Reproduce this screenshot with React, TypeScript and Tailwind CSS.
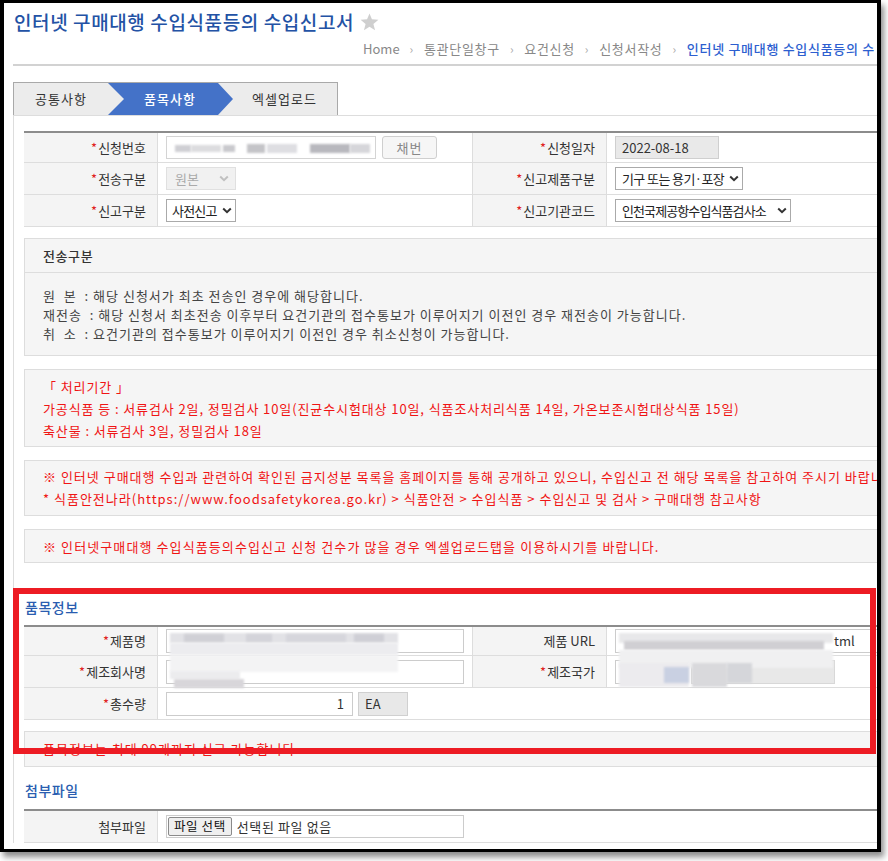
import React from "react";

const Chevron = ({ color = "#333" }: { color?: string }) => (
  <svg width="10" height="7" viewBox="0 0 10 7" className="shrink-0">
    <path d="M1.2 1.5 L5 5.2 L8.8 1.5" fill="none" stroke={color} strokeWidth="2" />
  </svg>
);

const Star = () => (
  <svg width="19" height="18" viewBox="0 0 24 23">
    <polygon
      points="12,0.5 15.1,8.1 23.4,8.6 17,13.9 19.1,22 12,17.5 4.9,22 7,13.9 0.6,8.6 8.9,8.1"
      fill="#cfcfcf"
    />
  </svg>
);

const Req = () => <span className="text-[#e02020] mr-[1px]">*</span>;

const Label = ({ children, req = true }: { children: React.ReactNode; req?: boolean }) => (
  <div className="w-[134px] shrink-0 h-full bg-[#f4f4f4] border-r border-[#dddddd] flex items-center justify-end pr-[11px] text-[13px] text-[#333]">
    {req && <Req />}
    {children}
  </div>
);

const Sep = () => <span className="text-[#aaa] text-[12px] mx-[10px]">›</span>;

const BlurBlocks = ({ blocks }: { blocks: [number, number, number, number, string][] }) => (
  <>
    {blocks.map(([l, t, w, h, c], i) => (
      <div
        key={i}
        className="absolute blur-[1px]"
        style={{ left: l, top: t, width: w, height: h, background: c }}
      />
    ))}
  </>
);

export default function App() {
  return (
    <div className="w-[888px] h-[861px] bg-white font-['Noto_Sans_CJK_KR','Noto_Sans',sans-serif]">
      <div className="w-[881px] h-[852px] border-x-4 border-t-[3px] border-b-[3px] border-black shadow-[3px_5px_6px_rgba(0,0,0,0.45)] overflow-hidden relative bg-white">
        <div className="w-[1000px]">
          {/* Title */}
          <div className="pt-[6px] pl-[10px] flex items-center gap-[6px]">
            <h1 className="text-[19px] leading-[26px] font-medium text-[#2352a5] tracking-[0.6px]">
              인터넷 구매대행 수입식품등의 수입신고서
            </h1>
            <Star />
          </div>
          {/* Breadcrumb */}
          <div className="mt-[5px] ml-[359px] flex items-center h-[18px] text-[13px] text-[#888] whitespace-nowrap tracking-[0.7px]">
            <span className="tracking-normal">Home</span>
            <Sep />
            <span>통관단일창구</span>
            <Sep />
            <span>요건신청</span>
            <Sep />
            <span>신청서작성</span>
            <Sep />
            <span className="text-[#2d5fd0] font-medium">인터넷 구매대행 수입식품등의 수</span>
          </div>
          <div className="mt-[6px] ml-[9px] h-[2px] bg-[#d2d2d2]" />

          {/* Tabs */}
          <div className="mt-[16px] ml-[9px] w-[325px] h-[34px] border border-[#a9a9a9] flex text-[13px] tracking-[1px]">
            <div className="w-[94px] bg-[#ececec] relative flex items-center justify-center text-[#333] z-20">
              공통사항
              <div className="absolute right-[-16px] top-0 w-0 h-0 border-y-[16px] border-y-transparent border-l-[16px] border-l-[#ececec]" />
            </div>
            <div className="w-[110px] bg-[#4472c8] relative flex items-center justify-center pl-[14px] text-white font-medium z-10">
              품목사항
              <div className="absolute right-[-15px] top-0 w-0 h-0 border-y-[16px] border-y-transparent border-l-[15px] border-l-[#4472c8]" />
            </div>
            <div className="flex-1 bg-[#ececec] flex items-center justify-center pl-[14px] text-[#333]">
              엑셀업로드
            </div>
          </div>

          {/* Content container */}
          <div className="ml-[9px] border-l border-t border-[#dddddd] pl-[10px] pt-[15px] -mt-[1px]">
            {/* Form table */}
            <div className="border-t-2 border-[#8c8c8c]">
              <div className="h-[30px] flex border-b border-[#dddddd]">
                <Label>신청번호</Label>
                <div className="w-[315px] shrink-0 border-r border-[#dddddd] flex items-center pl-[8px] gap-[6px]">
                  <div className="w-[210px] h-[23px] border border-[#d4d4d4] relative overflow-hidden bg-white">
                    <BlurBlocks
                      blocks={[
                        [8, 8, 16, 7, "#cfcfd4"],
                        [24, 8, 30, 7, "#dcdcdf"],
                        [56, 8, 12, 7, "#c9c9cd"],
                        [80, 7, 18, 9, "#c4c4c8"],
                        [100, 7, 30, 9, "#dedee2"],
                        [143, 7, 40, 9, "#b8b8be"],
                        [183, 7, 20, 9, "#d6d6da"],
                      ]}
                    />
                  </div>
                  <div className="w-[55px] h-[23px] border border-[#cfcfcf] rounded-[3px] bg-[#f6f6f6] flex items-center justify-center text-[13px] text-[#888] tracking-[1px]">
                    채번
                  </div>
                </div>
                <Label>신청일자</Label>
                <div className="flex-1 flex items-center pl-[8px]">
                  <div className="w-[104px] h-[23px] border border-[#cfcfcf] bg-[#e9e9e9] flex items-center pl-[6px] text-[13px] text-[#333]">
                    2022-08-18
                  </div>
                </div>
              </div>
              <div className="h-[32px] flex border-b border-[#dddddd]">
                <Label>전송구분</Label>
                <div className="w-[315px] shrink-0 border-r border-[#dddddd] flex items-center pl-[8px]">
                  <div className="w-[70px] h-[23px] border border-[#e0e0e0] bg-[#f1f1f1] flex items-center justify-between pl-[8px] pr-[6px] text-[13px] text-[#aaa]">
                    <span>원본</span>
                    <Chevron color="#c0c0c0" />
                  </div>
                </div>
                <Label>신고제품구분</Label>
                <div className="flex-1 flex items-center pl-[8px]">
                  <div className="w-[128px] h-[23px] border border-[#aaaaaa] bg-white flex items-center justify-between pl-[6px] pr-[3px] text-[13px] text-[#222] whitespace-nowrap overflow-hidden">
                    <span className="tracking-[-0.6px]">기구 또는 용기·포장</span>
                    <Chevron />
                  </div>
                </div>
              </div>
              <div className="h-[32px] flex border-b border-[#dddddd]">
                <Label>신고구분</Label>
                <div className="w-[315px] shrink-0 border-r border-[#dddddd] flex items-center pl-[8px]">
                  <div className="w-[70px] h-[23px] border border-[#aaaaaa] bg-white flex items-center justify-between pl-[5px] pr-[3px] text-[13px] text-[#222] whitespace-nowrap overflow-hidden">
                    <span className="tracking-[-0.8px]">사전신고</span>
                    <Chevron />
                  </div>
                </div>
                <Label>신고기관코드</Label>
                <div className="flex-1 flex items-center pl-[8px]">
                  <div className="w-[176px] h-[23px] border border-[#aaaaaa] bg-white flex items-center justify-between pl-[6px] pr-[3px] text-[13px] text-[#222] whitespace-nowrap overflow-hidden">
                    <span className="tracking-[-0.9px]">인천국제공항수입식품검사소</span>
                    <Chevron />
                  </div>
                </div>
              </div>
            </div>

            {/* 전송구분 box */}
            <div className="mt-[11px] border border-[#dddddd] bg-[#f5f5f5]">
              <div className="h-[34px] flex items-center pl-[18px] border-b border-[#dddddd] text-[13px] text-[#333] font-medium tracking-[0.6px]">
                전송구분
              </div>
              <div className="pt-[13px] pb-[12px] pl-[18px] text-[13px] leading-[19px] text-[#444] whitespace-pre tracking-[1px]">
                <div>원  본  : 해당 신청서가 최초 전송인 경우에 해당합니다.</div>
                <div>재전송  : 해당 신청서 최초전송 이후부터 요건기관의 접수통보가 이루어지기 이전인 경우 재전송이 가능합니다.</div>
                <div>취  소  : 요건기관의 접수통보가 이루어지기 이전인 경우 취소신청이 가능합니다.</div>
              </div>
            </div>

            {/* 처리기간 */}
            <div className="mt-[13px] border border-[#dddddd] bg-[#f5f5f5] pt-[6px] pb-[4px] pl-[18px] text-[13px] leading-[22px] text-[#f01414] whitespace-nowrap tracking-[0.9px]">
              <div>「 처리기간 」</div>
              <div>가공식품 등 : 서류검사 2일, 정밀검사 10일(진균수시험대상 10일, 식품조사처리식품 14일, 가온보존시험대상식품 15일)</div>
              <div>축산물 : 서류검사 3일, 정밀검사 18일</div>
            </div>

            <div className="mt-[13px] border border-[#dddddd] bg-[#f5f5f5] pt-[5px] pb-[5px] pl-[18px] text-[13px] leading-[22px] text-[#f01414] whitespace-nowrap tracking-[1px]">
              <div>※ 인터넷 구매대행 수입과 관련하여 확인된 금지성분 목록을 홈페이지를 통해 공개하고 있으니, 수입신고 전 해당 목록을 참고하여 주시기 바랍니다.</div>
              <div>* 식품안전나라(https://www.foodsafetykorea.go.kr) &gt; 식품안전 &gt; 수입식품 &gt; 수입신고 및 검사 &gt; 구매대행 참고사항</div>
            </div>

            <div className="mt-[13px] border border-[#dddddd] bg-[#f5f5f5] pt-[6px] pb-[4px] pl-[18px] text-[13px] leading-[22px] text-[#f01414] whitespace-nowrap tracking-[1.1px]">
              <div>※ 인터넷구매대행 수입식품등의수입신고 신청 건수가 많을 경우 엑셀업로드탭을 이용하시기를 바랍니다.</div>
            </div>

            {/* 품목정보 */}
            <h2 className="mt-[34px] pl-[1px] text-[14px] leading-[20px] text-[#2a5db0] font-medium tracking-[0.5px]">품목정보</h2>
            <div className="mt-[8px] border-t-2 border-[#8c8c8c] relative">
              <div className="h-[29px] flex border-b border-[#dddddd]">
                <Label>제품명</Label>
                <div className="w-[315px] shrink-0 border-r border-[#dddddd] flex items-center pl-[8px]">
                  <div className="w-[298px] h-[24px] border border-[#cccccc] bg-white" />
                </div>
                <Label req={false}>제품 URL</Label>
                <div className="flex-1 flex items-center pl-[8px]">
                  <div className="w-[300px] h-[24px] border border-[#cccccc] bg-white flex items-center pl-[218px] text-[13px] text-[#333]">
                    tml
                  </div>
                </div>
              </div>
              <div className="h-[32px] flex border-b border-[#dddddd]">
                <Label>제조회사명</Label>
                <div className="w-[315px] shrink-0 border-r border-[#dddddd] flex items-center pl-[8px]">
                  <div className="w-[298px] h-[24px] border border-[#cccccc] bg-white" />
                </div>
                <Label>제조국가</Label>
                <div className="flex-1 flex items-center pl-[8px] gap-[5px]">
                  <div className="w-[71px] h-[24px] border border-[#cccccc] bg-white" />
                  <div className="w-[144px] h-[24px] border border-[#d8d8d8] bg-[#e8e8e8]" />
                </div>
              </div>
              <div className="h-[32px] flex border-b border-[#dddddd]">
                <Label>총수량</Label>
                <div className="flex-1 flex items-center pl-[8px] gap-[5px]">
                  <div className="w-[187px] h-[24px] border border-[#cccccc] bg-white flex items-center justify-end pr-[8px] text-[13px] text-[#333]">
                    1
                  </div>
                  <div className="w-[50px] h-[24px] border border-[#d0d0d0] bg-[#e8e8e8] flex items-center pl-[6px] text-[13px] text-[#333]">
                    EA
                  </div>
                </div>
              </div>
              {/* blurred redactions */}
              <BlurBlocks
                blocks={[
                  [146, 6, 228, 10, "#e2e2e6"],
                  [160, 7, 40, 8, "#d0d0d6"],
                  [222, 7, 26, 8, "#d4d4da"],
                  [262, 7, 60, 8, "#d6d6dc"],
                  [330, 7, 30, 8, "#cfcfd6"],
                  [146, 16, 228, 12, "#ececef"],
                  [146, 28, 228, 17, "#f3f3f4"],
                  [146, 44, 70, 8, "#ececee"],
                  [150, 52, 70, 9, "#d8d6da"],
                  [595, 6, 214, 10, "#e8e8ea"],
                  [600, 14, 200, 9, "#d0cfd3"],
                  [595, 23, 214, 18, "#f0f0f1"],
                  [595, 36, 70, 24, "#ecebee"],
                  [640, 40, 25, 16, "#c9d0e2"],
                  [668, 36, 35, 24, "#d9d9dc"],
                  [703, 36, 25, 20, "#d5d6da"],
                ]}
              />
            </div>
            <div className="mt-[11px] border border-[#dddddd] bg-[#f5f5f5] pt-[6px] pb-[6px] pl-[18px] text-[13px] leading-[22px] text-[#f01414] whitespace-nowrap tracking-[1px]">
              품목정보는 최대 99개까지 신고 가능합니다.
            </div>

            {/* 첨부파일 */}
            <h2 className="mt-[13px] pl-[1px] text-[14px] leading-[20px] text-[#2a5db0] font-medium tracking-[0.5px]">첨부파일</h2>
            <div className="mt-[9px] border-t-2 border-[#8c8c8c]">
              <div className="h-[32px] flex border-b border-[#dddddd]">
                <Label req={false}>첨부파일</Label>
                <div className="flex-1 flex items-center pl-[8px]">
                  <div className="w-[298px] h-[23px] border border-[#cccccc] bg-white flex items-center pl-[1px] text-[13px] text-[#333] tracking-[0.6px]">
                    <div className="h-[19px] px-[5px] border border-[#8a8a8a] rounded-[2px] bg-[#efefef] flex items-center text-[12.5px] text-[#111]">
                      파일 선택
                    </div>
                    <span className="ml-[5px]">선택된 파일 없음</span>
                  </div>
                </div>
              </div>
            </div>
          </div>
        </div>

        {/* red annotation */}
        <div className="absolute left-[9px] top-[585px] w-[863px] h-[166px] border-[6px] border-[#ed1c24] pointer-events-none" />
      </div>
    </div>
  );
}
